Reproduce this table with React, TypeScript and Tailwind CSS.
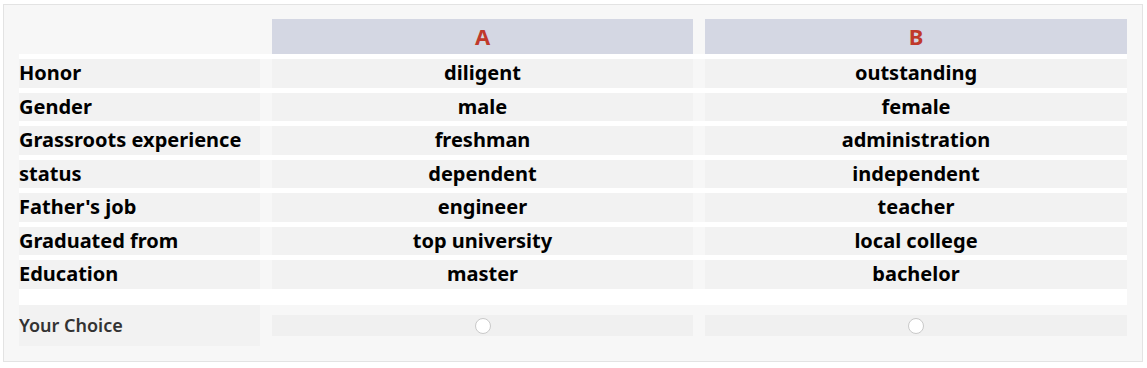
import React from 'react';

const rows = [
  { label: 'Honor', a: 'diligent', b: 'outstanding' },
  { label: 'Gender', a: 'male', b: 'female' },
  { label: 'Grassroots experience', a: 'freshman', b: 'administration' },
  { label: 'status', a: 'dependent', b: 'independent' },
  { label: "Father's job", a: 'engineer', b: 'teacher' },
  { label: 'Graduated from', a: 'top university', b: 'local college' },
  { label: 'Education', a: 'master', b: 'bachelor' },
];

function Radio() {
  return <span className="block h-[16px] w-[16px] rounded-full border border-[#c9c9c9] bg-white" />;
}

export default function App() {
  return (
    <div className="bg-white pl-[3px] pt-[4px] font-['Noto_Sans',sans-serif]">
      <div className="w-[1140px] h-[358px] border border-[#e3e3e3] bg-[#f7f7f7] px-[15px] pt-[14px]">
        <div className="flex flex-col w-[1108px]">
          {/* header */}
          <div className="flex h-[35px] gap-[12px]">
            <div className="w-[241px]" />
            <div className="w-[421px] flex items-center justify-center bg-[#d4d7e3] text-[22px] font-bold text-[#c0392b]">A</div>
            <div className="w-[422px] flex items-center justify-center bg-[#d4d7e3] text-[22px] font-bold text-[#c0392b]">B</div>
          </div>

          {rows.map((r) => (
            <div key={r.label} className="border-t-[5px] border-white">
              <div className="flex h-[28.5px] gap-[12px] text-[20px] font-bold text-black leading-none">
                <div className="w-[241px] flex items-center bg-[#f2f2f2]">{r.label}</div>
                <div className="w-[421px] flex items-center justify-center bg-[#f2f2f2]">{r.a}</div>
                <div className="w-[422px] flex items-center justify-center bg-[#f2f2f2]">{r.b}</div>
              </div>
            </div>
          ))}

          <div className="h-[16.5px] bg-white" />

          {/* choice row */}
          <div className="flex h-[41px] gap-[12px]">
            <div className="w-[241px] flex items-center bg-[#f2f2f2] text-[18px] font-semibold text-[#333]">Your Choice</div>
            <div className="w-[421px] flex items-center">
              <div className="w-full h-[21px] flex items-center justify-center bg-[#f0f0f0]">
                <Radio />
              </div>
            </div>
            <div className="w-[422px] flex items-center">
              <div className="w-full h-[21px] flex items-center justify-center bg-[#f0f0f0]">
                <Radio />
              </div>
            </div>
          </div>
        </div>
      </div>
    </div>
  );
}
